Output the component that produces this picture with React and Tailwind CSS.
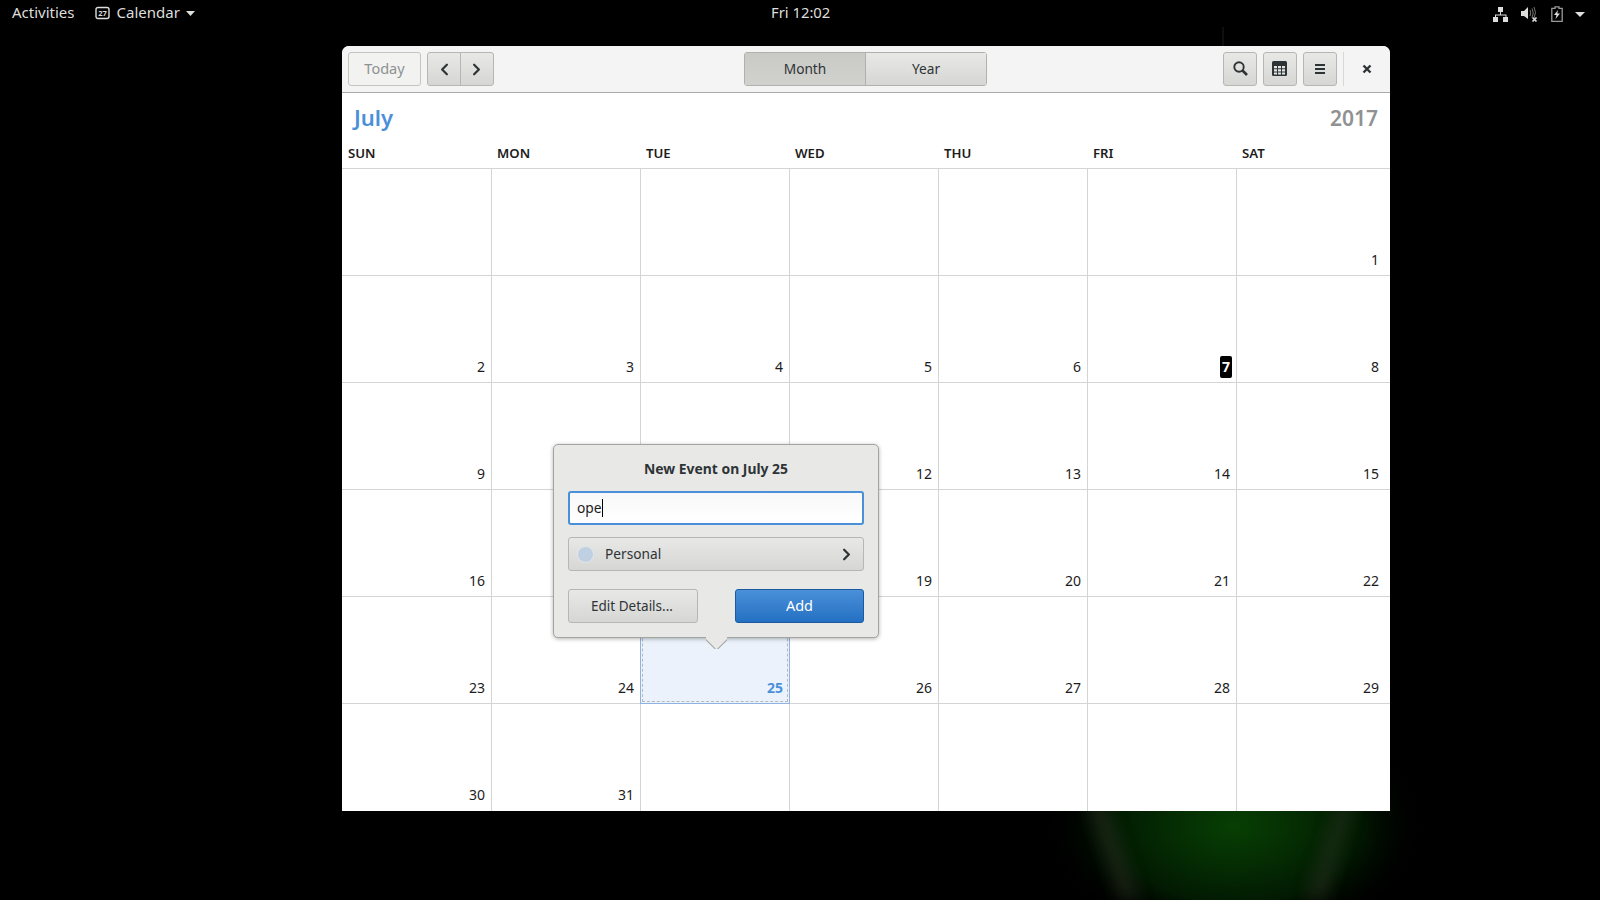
import React from "react";
import { ChevronLeft, ChevronRight } from "lucide-react";

const btn = "border border-[#b6b6b3] bg-gradient-to-b from-[#e8e8e7] to-[#d6d6d4] text-[#2e3436]";

function Wallpaper() {
  return (
    <svg className="absolute inset-0" width="1600" height="900" viewBox="0 0 1600 900">
      <defs>
        <radialGradient id="g1" cx="0.5" cy="0.5" r="0.5">
          <stop offset="0" stopColor="#073f03" />
          <stop offset="0.3" stopColor="#052f03" />
          <stop offset="0.65" stopColor="#021a02" />
          <stop offset="1" stopColor="#000" stopOpacity="0" />
        </radialGradient>
        <filter id="b1" x="-100%" y="-20%" width="300%" height="140%"><feGaussianBlur stdDeviation="8" /></filter>
      </defs>
      <rect width="1600" height="900" fill="#000" />
      <ellipse cx="1235" cy="825" rx="190" ry="120" fill="url(#g1)" />
      <path d="M1085 800 L1105 800 L1140 900 L1120 900 Z" fill="#2a3322" opacity="0.55" filter="url(#b1)" />
      <path d="M1340 800 L1355 800 L1325 900 L1305 900 Z" fill="#2a3322" opacity="0.55" filter="url(#b1)" />
      <path d="M1223 27 V46" stroke="#1c1c1c" strokeWidth="1" />
    </svg>
  );
}

function TopBar() {
  return (
    <div className="relative flex h-[26px] items-center text-[15px] text-[#dededc]">
      <span className="ml-3 mt-[-2px]">Activities</span>
      <svg className="ml-[20px]" width="15" height="14" viewBox="0 0 15 14">
        <rect x="1" y="1.5" width="13" height="11" rx="2" fill="none" stroke="#dededc" strokeWidth="1.4" />
        <text x="7.5" y="10" textAnchor="middle" fontSize="7.5" fontWeight="700" fill="#dededc">27</text>
      </svg>
      <span className="ml-[7px] mt-[-2px]">Calendar</span>
      <svg className="ml-[6px]" width="9" height="5" viewBox="0 0 9 5"><path d="M0 0H9L4.5 5Z" fill="#dededc" /></svg>
      <span className="absolute left-[771px] top-[1px] text-[14.8px]">Fri 12:02</span>
      <div className="absolute left-[1493px] top-[6px] flex items-center">
        <svg width="15" height="15" viewBox="0 0 15 15" fill="#dededc">
          <rect x="5" y="0" width="5" height="5" />
          <rect x="0" y="10" width="5" height="5" />
          <rect x="10" y="10" width="5" height="5" />
          <path d="M7 5h1v2.5h5.500V10h-1V8.500H3V10H2V7.500h5Z" />
        </svg>
        <svg className="ml-[13px]" width="17" height="16" viewBox="0 0 17 16" fill="none">
          <path d="M0 5h3l4-4v12l-4-3H0Z" fill="#dededc" />
          <path d="M9 4q1.500 3 0 6M11 2.500q2.500 4.500 0 9M13 1q3 5.500 0 11" stroke="#777" strokeWidth="1" />
          <path d="M11.500 11.500l4 4M15.500 11.500l-4 4" stroke="#dededc" strokeWidth="1.600" />
        </svg>
        <svg className="ml-[13px]" width="12" height="16" viewBox="0 0 12 16" fill="none">
          <path d="M4 .8h4v1.500h3.200v13H.8V2.300H4Z" stroke="#9a9a9a" strokeWidth="1.300" />
          <path d="M7 4 3 9h2.500L4.500 13 9 7.500H6.300Z" fill="#dededc" />
        </svg>
        <svg className="ml-[12px]" width="10" height="5" viewBox="0 0 10 5"><path d="M0 0H10L5 5Z" fill="#dededc" /></svg>
      </div>
    </div>
  );
}

function HeaderBar() {
  return (
    <div className="relative h-[47px] shrink-0 rounded-t-[7px] border-b border-[#a9a9a6] bg-[#f4f4f4]">
      <div className="absolute left-[6px] top-[6px] flex h-[34px] w-[73px] items-center justify-center rounded-[3px] border border-[#c4c4c1] bg-[#f2f2f1] text-[14.5px] text-[#8e9192]">Today</div>
      <div className={`absolute left-[85px] top-[6px] flex h-[34px] w-[67px] rounded-[3px] ${btn}`}>
        <div className="flex flex-1 items-center justify-center border-r border-[#b6b6b3] pl-[1px]"><ChevronLeft size={19} strokeWidth={2.8} /></div>
        <div className="flex flex-1 items-center justify-center pr-[1px]"><ChevronRight size={19} strokeWidth={2.8} /></div>
      </div>
      <div className="absolute left-[402px] top-[6px] flex h-[34px] w-[243px] rounded-[3px] border border-[#b0b0ad] text-[13.7px] text-[#2e3436]">
        <div className="flex w-[121px] items-center justify-center border-r border-[#b0b0ad] bg-gradient-to-b from-[#c9c9c5] to-[#d1d1ce]">Month</div>
        <div className="flex flex-1 items-center justify-center bg-gradient-to-b from-[#e8e8e7] to-[#d6d6d4]">Year</div>
      </div>
      <div className={`absolute left-[881px] top-[6px] flex h-[34px] w-[34px] items-center justify-center rounded-[3px] pb-[1px] ${btn}`}>
        <svg width="15" height="15" viewBox="0 0 15 15" fill="none" stroke="#2e3436">
          <circle cx="6" cy="6" r="4.700" strokeWidth="1.900" />
          <path d="M9.500 9.500 14 14" strokeWidth="2.700" />
        </svg>
      </div>
      <div className={`absolute left-[921px] top-[6px] flex h-[34px] w-[34px] items-center justify-center rounded-[3px] pb-[1px] pr-[1px] ${btn}`}>
        <svg width="15" height="15" viewBox="0 0 15 15">
          <rect width="15" height="15" rx="1.500" fill="#2e3436" />
          <path d="M2 5h3v2.300H2ZM6 5h3v2.300H6ZM10 5h3v2.300h-3ZM2 8.300h3v2.300H2ZM6 8.300h3v2.300H6ZM10 8.300h3v2.300h-3ZM6 11.500h3v2H6ZM2 11.500h3v2H2ZM10 11.500h3v2h-3Z" fill="#e4e4e3" />
        </svg>
      </div>
      <div className={`absolute left-[961px] top-[6px] flex h-[34px] w-[34px] items-center justify-center rounded-[3px] ${btn}`}>
        <svg width="12" height="12" viewBox="0 0 12 12" fill="#2e3436"><rect x="1" y="1" width="10" height="2" /><rect x="1" y="5" width="10" height="2" /><rect x="1" y="9" width="10" height="2" /></svg>
      </div>
      <div className="absolute left-[1001px] top-[6px] h-[34px] w-px bg-[#d8d8d6]" />
      <svg className="absolute left-[1020px] top-[18px]" width="10" height="10" viewBox="0 0 10 10"><path d="M1.500 1.500l7 7M8.500 1.500l-7 7" stroke="#2e3436" strokeWidth="2.400" /></svg>
    </div>
  );
}

const days = ["SUN", "MON", "TUE", "WED", "THU", "FRI", "SAT"];
const cells = [
  "", "", "", "", "", "", "1",
  "2", "3", "4", "5", "6", "7", "8",
  "9", "10", "11", "12", "13", "14", "15",
  "16", "17", "18", "19", "20", "21", "22",
  "23", "24", "25", "26", "27", "28", "29",
  "30", "31", "", "", "", "", "",
];

function Cell({ value, index }) {
  const col = index % 7;
  const selected = value === "25";
  const today = value === "7";
  const hidden = value === "10" || value === "11" || value === "17" || value === "18";
  return (
    <div className={`relative flex items-end justify-end text-[14px] leading-[20px] text-[#1c1c1c] ${col < 6 ? "border-r pr-[6px]" : "pr-[11px]"} ${index < 35 ? "border-b pb-[5px]" : "pb-[6px]"} ${selected ? "border-[#8fb2de] bg-[#ebf2fb]" : "border-[#d4d4d4]"}`}>
      {selected && <div className="absolute bottom-[-1px] left-[-1px] top-0 w-px bg-[#8fb2de]" />}
      {selected && <div className="absolute inset-[1px] border border-dashed border-[#b4b9bf]" />}
      {today ? (
        <span className="mb-[-1px] mr-[-2px] flex h-[22px] w-[12px] items-center justify-center rounded-[2px] bg-black font-bold text-white">7</span>
      ) : (
        <span className={selected ? "relative font-bold text-[#4a90d9]" : ""}>{hidden ? "" : value}</span>
      )}
    </div>
  );
}

function Popover() {
  return (
    <div className="absolute left-[211px] top-[398px] h-[194px] w-[326px] rounded-[5px] border border-[#a4a4a1] bg-[#e8e8e7] shadow-[0_1px_4px_rgba(0,0,0,0.3)]">
      <div className="absolute left-[152px] top-[191px] h-[13px] w-[21px] overflow-hidden">
        <div className="ml-[1px] mt-[-8px] h-[19px] w-[19px] rotate-45 border-b border-r border-[#a4a4a1] bg-[#e8e8e7]" />
      </div>
      <div className="mt-[14px] text-center text-[13.9px] font-bold leading-[20px] text-[#2e3436]">New Event on July 25</div>
      <div className="mx-[14px] mt-[12px] flex h-[34px] items-center rounded-[3px] border-2 border-[#4a90d9] bg-gradient-to-b from-[#f8f8f8] to-white px-[7px] text-[13.8px] text-[#1c1c1c]">
        ope<span className="h-[18px] w-px bg-black" />
      </div>
      <div className={`mx-[14px] mt-[12px] flex h-[34px] items-center rounded-[3px] pl-[8px] pr-[7px] text-[13.7px] ${btn}`}>
        <span className="h-[17px] w-[17px] rounded-full border border-[#e6e8ea] bg-[#bed0e2]" />
        <span className="ml-[11px] flex-1">Personal</span>
        <ChevronRight size={19} strokeWidth={2.8} />
      </div>
      <div className="mx-[14px] mt-[18px] flex justify-between text-[13.5px]">
        <div className={`flex h-[34px] w-[130px] items-center justify-center rounded-[3px] pr-[2px] ${btn}`}>Edit Details...</div>
        <div className="flex h-[34px] w-[129px] items-center justify-center rounded-[3px] border border-[#1b5a9e] bg-gradient-to-b from-[#4a90d9] to-[#2370c2] text-[14.5px] text-white">Add</div>
      </div>
    </div>
  );
}

function CalendarWindow() {
  return (
    <div className="relative ml-[342px] mt-[20px] flex h-[765px] w-[1048px] flex-col rounded-t-[7px] bg-white">
      <HeaderBar />
      <div className="flex h-[46px] shrink-0 items-center justify-between px-[12px] pt-[3px] font-semibold">
        <span className="text-[22px] text-[#4a90d9]">July</span>
        <span className="pt-[2px] text-[21px] text-[#8f9192]">2017</span>
      </div>
      <div className="grid h-[30px] shrink-0 grid-cols-[150px_149px_149px_149px_149px_149px_153px] border-b border-[#d4d4d4] text-[13.2px] font-semibold text-[#1c1c1c]">
        {days.map((d, i) => <span key={d} className={`pt-[5px] ${i === 0 ? "pl-[6px]" : "pl-[5px]"}`}>{d}</span>)}
      </div>
      <div className="grid min-h-0 flex-1 grid-cols-[150px_149px_149px_149px_149px_149px_153px] grid-rows-[107px_107px_107px_107px_107px_107px]">
        {cells.map((v, i) => <Cell key={i} value={v} index={i} />)}
      </div>
      <Popover />
    </div>
  );
}

export default function App() {
  return (
    <div className="relative h-[900px] w-[1600px] overflow-hidden bg-black font-['Noto_Sans','Open_Sans',sans-serif]">
      <Wallpaper />
      <TopBar />
      <CalendarWindow />
    </div>
  );
}
